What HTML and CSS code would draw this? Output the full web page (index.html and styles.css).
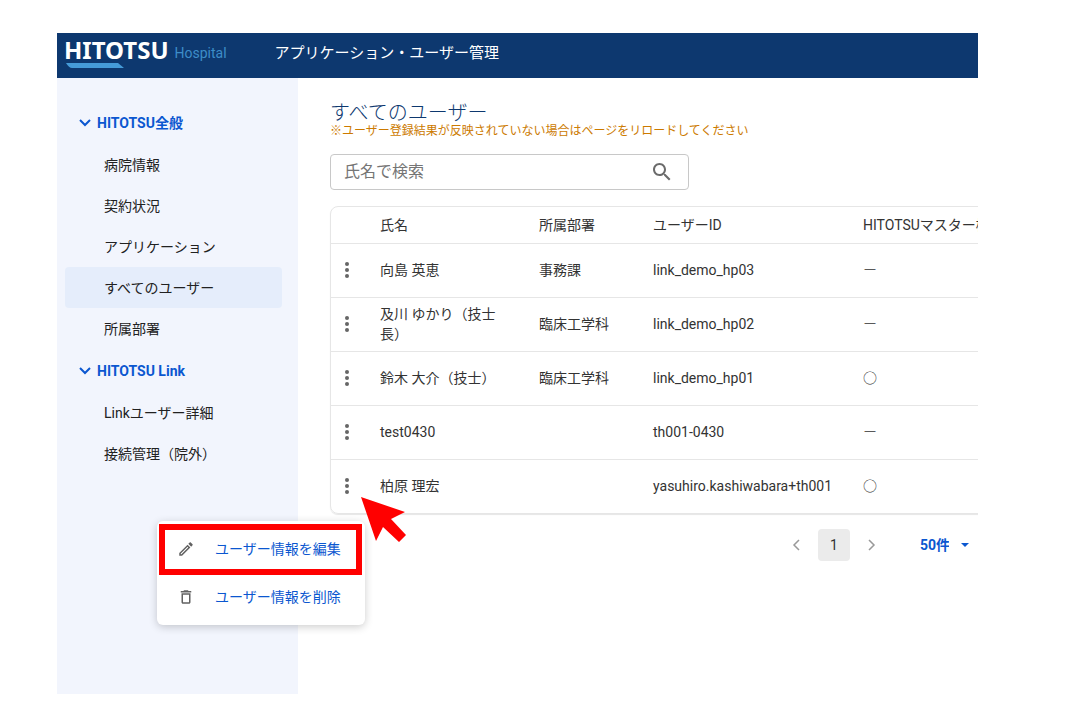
FILE: index.html
```html
<!DOCTYPE html>
<html lang="ja">
<head>
  <meta charset="UTF-8">
  <meta name="viewport" content="width=device-width, initial-scale=1.0">
  <title>アプリケーション・ユーザー管理</title>
  <link rel="stylesheet" href="styles.css">
</head>
<body>
  <div class="app">
    <header class="header">
      <a class="logo" href="#">
        <span class="logo-mark">
          <span class="logo-name">HITOTSU</span>
          <svg class="logo-line" viewBox="0 0 58 5" width="58" height="5" aria-hidden="true"><path d="M0 0h52l6 5H6Q3 5 0 0z" fill="#459bd8"/></svg>
        </span>
        <span class="logo-sub">Hospital</span>
      </a>
      <span class="header-title">アプリケーション・ユーザー管理</span>
    </header>

    <div class="body">
      <nav class="sidebar">
        <button class="group" type="button">
          <svg viewBox="0 0 12 8" width="12" height="8" aria-hidden="true"><path d="M1 1l5 5 5-5" fill="none" stroke="currentColor" stroke-width="2"/></svg>
          HITOTSU全般
        </button>
        <ul>
          <li><a href="#">病院情報</a></li>
          <li><a href="#">契約状況</a></li>
          <li><a href="#">アプリケーション</a></li>
          <li><a class="active" href="#">すべてのユーザー</a></li>
          <li><a href="#">所属部署</a></li>
        </ul>
        <button class="group" type="button">
          <svg viewBox="0 0 12 8" width="12" height="8" aria-hidden="true"><path d="M1 1l5 5 5-5" fill="none" stroke="currentColor" stroke-width="2"/></svg>
          HITOTSU Link
        </button>
        <ul>
          <li><a href="#">Linkユーザー詳細</a></li>
          <li><a href="#">接続管理（院外）</a></li>
        </ul>
      </nav>

      <main class="main">
        <h1>すべてのユーザー</h1>
        <p class="note">※ユーザー登録結果が反映されていない場合はページをリロードしてください</p>

        <form class="search">
          <input type="text" placeholder="氏名で検索" aria-label="氏名で検索">
          <button type="button" aria-label="検索">
            <svg viewBox="0 0 24 24" width="24" height="24"><path fill="currentColor" d="M15.5 14h-.79l-.28-.27C15.41 12.59 16 11.11 16 9.5 16 5.91 13.09 3 9.5 3S3 5.91 3 9.5 5.91 16 9.5 16c1.61 0 3.09-.59 4.23-1.57l.27.28v.79l5 4.99L20.49 19l-4.99-5zm-6 0C7.01 14 5 11.99 5 9.5S7.01 5 9.5 5 14 7.01 14 9.5 11.99 14 9.5 14z"/></svg>
          </button>
        </form>

        <div class="table-card">
          <table>
            <colgroup>
              <col class="col-menu">
              <col class="col-name">
              <col class="col-dept">
              <col class="col-id">
              <col class="col-master">
            </colgroup>
            <thead>
              <tr><th></th><th>氏名</th><th>所属部署</th><th>ユーザーID</th><th>HITOTSUマスター権限</th></tr>
            </thead>
            <tbody>
              <tr>
                <td><button class="more" type="button" aria-label="メニュー"><svg viewBox="0 0 4 16" width="4" height="16"><g fill="currentColor"><circle cx="2" cy="2" r="2"/><circle cx="2" cy="8" r="2"/><circle cx="2" cy="14" r="2"/></g></svg></button></td>
                <td>向島 英恵</td><td>事務課</td><td>link_demo_hp03</td><td class="flag">ー</td>
              </tr>
              <tr>
                <td><button class="more" type="button" aria-label="メニュー"><svg viewBox="0 0 4 16" width="4" height="16"><g fill="currentColor"><circle cx="2" cy="2" r="2"/><circle cx="2" cy="8" r="2"/><circle cx="2" cy="14" r="2"/></g></svg></button></td>
                <td>及川 ゆかり（技士長）</td><td>臨床工学科</td><td>link_demo_hp02</td><td class="flag">ー</td>
              </tr>
              <tr>
                <td><button class="more" type="button" aria-label="メニュー"><svg viewBox="0 0 4 16" width="4" height="16"><g fill="currentColor"><circle cx="2" cy="2" r="2"/><circle cx="2" cy="8" r="2"/><circle cx="2" cy="14" r="2"/></g></svg></button></td>
                <td>鈴木 大介（技士）</td><td>臨床工学科</td><td>link_demo_hp01</td><td>○</td>
              </tr>
              <tr>
                <td><button class="more" type="button" aria-label="メニュー"><svg viewBox="0 0 4 16" width="4" height="16"><g fill="currentColor"><circle cx="2" cy="2" r="2"/><circle cx="2" cy="8" r="2"/><circle cx="2" cy="14" r="2"/></g></svg></button></td>
                <td>test0430</td><td></td><td>th001-0430</td><td class="flag">ー</td>
              </tr>
              <tr>
                <td><button class="more" type="button" aria-label="メニュー"><svg viewBox="0 0 4 16" width="4" height="16"><g fill="currentColor"><circle cx="2" cy="2" r="2"/><circle cx="2" cy="8" r="2"/><circle cx="2" cy="14" r="2"/></g></svg></button></td>
                <td>柏原 理宏</td><td></td><td>yasuhiro.kashiwabara+th001</td><td>○</td>
              </tr>
            </tbody>
          </table>
        </div>

        <div class="pager">
          <button class="page-arrow" type="button" aria-label="前へ"><svg viewBox="0 0 8 12" width="8" height="12"><path d="M7 1L2 6l5 5" fill="none" stroke="currentColor" stroke-width="1.5"/></svg></button>
          <button class="page" type="button">1</button>
          <button class="page-arrow" type="button" aria-label="次へ"><svg viewBox="0 0 8 12" width="8" height="12"><path d="M1 1l5 5-5 5" fill="none" stroke="currentColor" stroke-width="1.5"/></svg></button>
          <label class="per-page">
            <select aria-label="表示件数">
              <option>50件</option>
              <option>100件</option>
            </select>
            <svg viewBox="0 0 8 4" width="8" height="4" aria-hidden="true"><path d="M0 0h8L4 4z" fill="currentColor"/></svg>
          </label>
        </div>
      </main>
    </div>

    <div class="menu">
      <button class="menu-item" type="button">
        <svg viewBox="0 0 24 24" width="18" height="18" aria-hidden="true"><path fill="currentColor" d="M14.06 9.02l.92.92L5.92 19H5v-.92l9.06-9.06M17.66 3c-.25 0-.51.1-.7.29l-1.83 1.83 3.75 3.75 1.83-1.83c.39-.39.39-1.02 0-1.41l-2.34-2.34c-.2-.2-.45-.29-.71-.29zm-3.6 3.19L3 17.25V21h3.75L17.81 9.94l-3.75-3.75z"/></svg>
        ユーザー情報を編集
      </button>
      <button class="menu-item" type="button">
        <svg viewBox="0 0 24 24" width="18" height="18" aria-hidden="true"><path fill="currentColor" d="M6 19c0 1.1.9 2 2 2h8c1.1 0 2-.9 2-2V7H6v12zM8 9h8v10H8V9zm7.5-5l-1-1h-5l-1 1H5v2h14V4z"/></svg>
        ユーザー情報を削除
      </button>
      <div class="highlight"></div>
      <svg class="pointer" viewBox="0 0 46 46" width="46" height="46" aria-hidden="true"><path d="M0 0l44 15-14 7 15 16-7 7-16-15-7 14z" fill="#f00"/></svg>
    </div>
  </div>
</body>
</html>
```
FILE: styles.css
```css
* {
  box-sizing: border-box;
}
body {
  margin: 0;
  min-height: 100vh;
  display: flex;
  padding: 33px 91px 22px 57px;
  background: #fff;
  color: #333;
  font-family: Roboto, "Noto Sans CJK JP", sans-serif;
  font-size: 14px;
  line-height: 20px;
}
button, input, select {
  font: inherit;
  color: inherit;
  background: none;
  border: 0;
  padding: 0;
}
button {
  cursor: pointer;
}
svg {
  display: block;
  flex: none;
}
a {
  color: inherit;
  text-decoration: none;
}
.app {
  position: relative;
  flex: 1;
  min-width: 0;
  display: flex;
  flex-direction: column;
}

/* header */
.header {
  display: flex;
  align-items: center;
  gap: 48px;
  height: 45px;
  padding: 0 7px 5px;
  background: #0d386f;
  color: #fff;
}
.logo {
  display: flex;
  align-items: center;
  gap: 6px;
}
.logo-name {
  display: block;
  font-family: "Noto Sans", sans-serif;
  font-size: 24px;
  font-weight: 700;
  line-height: 24px;
}
.logo-line {
  margin: 1px 0 0 2px;
}
.logo-sub {
  color: #3d8dc8;
}
.header-title {
  font-size: 15px;
}

/* sidebar */
.body {
  flex: 1;
  display: flex;
}
.sidebar {
  flex: none;
  width: 241px;
  padding: 23px 16px 24px 8px;
  background: #f2f5fd;
}
.sidebar ul {
  list-style: none;
  margin: 0;
  padding: 0;
}
.sidebar a {
  display: flex;
  align-items: center;
  height: 41px;
  padding-left: 39px;
  border-radius: 4px;
  color: #212121;
}
.sidebar a.active {
  background: #e5edfb;
}
.group {
  display: flex;
  align-items: center;
  gap: 6px;
  height: 43px;
  padding-left: 14px;
  color: #0b57d0;
  font-weight: 700;
}

/* main */
.main {
  flex: 1;
  min-width: 0;
  overflow: hidden;
  padding: 24px 0 24px 32px;
}
h1 {
  margin: 0;
  font-size: 20px;
  font-weight: 300;
  line-height: 22px;
  color: #0d386f;
}
.note {
  margin: 0 0 16px;
  font-size: 12px;
  line-height: 14px;
  color: #cc7a00;
}
.search {
  display: flex;
  align-items: center;
  width: 359px;
  height: 36px;
  margin-bottom: 16px;
  padding: 0 14px 0 13px;
  border: 1px solid #c8c8c8;
  border-radius: 4px;
}
.search input {
  flex: 1;
  min-width: 0;
  outline: 0;
  font-size: 16px;
}
.search input::placeholder {
  color: #757575;
}
.search button {
  color: #6b6b6b;
}
.table-card {
  width: max-content;
  min-width: 100%;
  border: 1px solid #e6e6e6;
  border-radius: 8px;
  box-shadow: 0 1px 1px rgba(0, 0, 0, 0.1);
}
table {
  table-layout: fixed;
  width: 713px;
  border-collapse: collapse;
}
.col-menu {
  width: 33px;
}
.col-name {
  width: 159px;
}
.col-dept {
  width: 114px;
}
.col-id {
  width: 210px;
}
th, td {
  height: 54px;
  padding: 0 16px;
  border-top: 1px solid #e6e6e6;
  text-align: left;
  font-weight: 400;
}
th {
  height: 36px;
  border-top: 0;
  white-space: nowrap;
}
td:first-child {
  padding: 0;
}
.flag {
  font-weight: 300;
}
.more {
  display: flex;
  justify-content: center;
  width: 32px;
  padding: 8px 0;
  color: #666;
}

/* pagination */
.pager {
  display: flex;
  align-items: center;
  justify-content: flex-end;
  gap: 18px;
  margin-top: 15px;
  padding-right: 9px;
}
.page {
  width: 32px;
  height: 32px;
  border-radius: 4px;
  background: #ebebeb;
}
.page-arrow {
  color: #999;
}
.per-page {
  display: flex;
  align-items: center;
  gap: 12px;
  margin-left: 26px;
  color: #0b57d0;
  font-weight: 700;
}
.per-page select {
  appearance: none;
  width: 29px;
}

/* row menu */
.menu {
  position: absolute;
  left: 100px;
  top: 488px;
  width: 208px;
  padding: 4px 0;
  background: #fff;
  border-radius: 6px;
  box-shadow: 0 2px 8px rgba(0, 0, 0, 0.2);
}
.menu-item {
  display: flex;
  align-items: center;
  gap: 20px;
  width: 100%;
  height: 48px;
  padding-left: 20px;
  color: #0b57d0;
}
.menu-item svg {
  color: #616161;
}
.highlight {
  position: absolute;
  left: 2px;
  top: 3px;
  width: 203px;
  height: 51px;
  border: 6px solid #f00;
  pointer-events: none;
}
.pointer {
  position: absolute;
  left: 204px;
  top: -24px;
}
```
